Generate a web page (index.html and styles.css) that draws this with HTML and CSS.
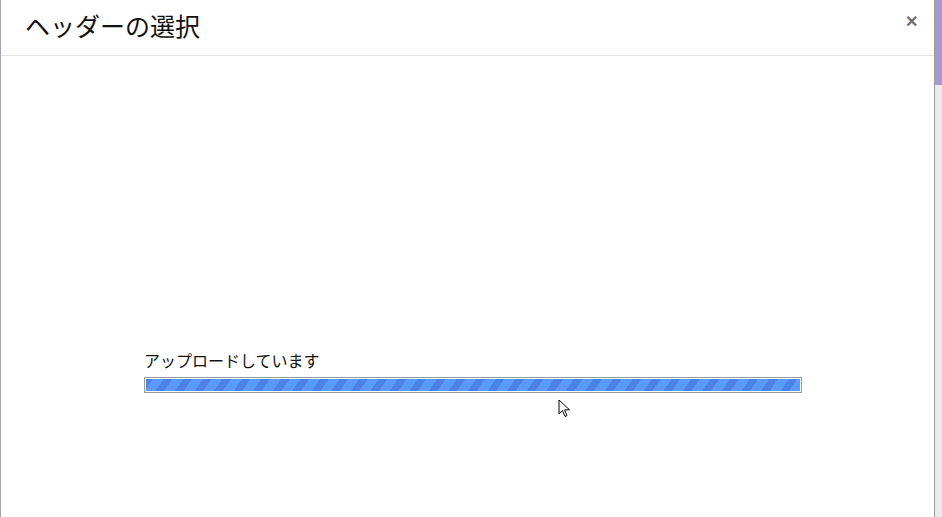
FILE: index.html
```html
<!DOCTYPE html>
<html lang="ja">
<head>
<meta charset="utf-8">
<link rel="stylesheet" href="styles.css">
</head>
<body>
<div class="page">
  <div class="dialog">
    <div class="header">
      <h1 class="title">ヘッダーの選択</h1>
      <span class="close">&#x2715;</span>
    </div>
    <div class="content">
      <div class="upload">
        <div class="label">アップロードしています</div>
        <div class="bar"><div class="fill"></div></div>
      </div>
    </div>
    <svg class="cursor" width="14" height="20" viewBox="0 0 14 20"><path d="M1 1 L1 15 L4.5 11.5 L7 17.5 L9 16.6 L6.6 10.8 L11.5 10.8 Z" fill="#fff" stroke="#000" stroke-width="1" stroke-linejoin="miter"/></svg>
  </div>
  <div class="scroll"><div class="thumb"></div><div class="track"></div></div>
</div>
</body>
</html>
```
FILE: styles.css
```css
html, body { margin: 0; padding: 0; }
body {
  width: 942px; height: 517px; overflow: hidden;
  font-family: "Noto Sans CJK JP", "Liberation Sans", sans-serif;
  background: #ebebeb;
}
.page { display: flex; height: 517px; }
.dialog {
  position: relative;
  width: 933px;
  border-left: 1px solid #a4a4ac;
  border-right: 1px solid #9c9c9c;
  background: #fff;
  display: flex; flex-direction: column;
}
.header {
  height: 55px;
  border-bottom: 1px solid #e3e3e3;
  display: flex; align-items: flex-start; justify-content: space-between;
  padding: 0 16px 0 24px;
}
.title {
  margin: 7px 0 0 0;
  font-size: 25px; font-weight: normal; line-height: 36px;
  color: #111;
}
.close {
  margin-top: 9px;
  font-size: 16px; font-weight: bold; color: #6e6e6e;
  line-height: 22px;
}
.content { padding: 294px 0 0 143px; }
.upload { width: 658px; }
.label { font-size: 16px; line-height: 21px; color: #111; }
.bar {
  margin-top: 6px;
  border: 1px solid #9a9a9a;
  padding: 1px;
  box-sizing: border-box;
  height: 16px;
  background: #fff;
}
.fill {
  height: 100%;
  background: repeating-linear-gradient(-55deg, #5a99ff 0 9px, #4a82e6 9px 16px);
}
.cursor { position: absolute; left: 557px; top: 399px; }
.scroll { width: 7px; display: flex; flex-direction: column; }
.thumb { height: 85px; background: #a897d8; }
.track { flex: 1; background: #ebebeb; }
```
